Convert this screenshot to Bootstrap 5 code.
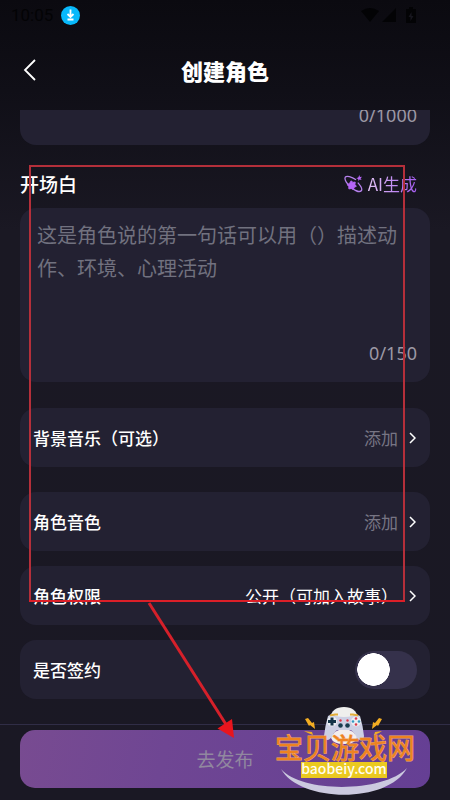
<!DOCTYPE html>
<html lang="zh-CN">
<head>
<meta charset="utf-8">
<meta name="viewport" content="width=device-width, initial-scale=1">
<title>创建角色</title>
<link href="https://cdn.jsdelivr.net/npm/bootstrap@5.3.0/dist/css/bootstrap.min.css" rel="stylesheet">
<style>
  body {
    background: linear-gradient(#0b0a10 0, #100f17 90px, #1a1823 230px, #1a1824 100%);
    color: #fff;
    font-family: "Noto Sans", "Noto Sans CJK SC", sans-serif;
    font-size: 17px;
    line-height: 24px;
  }
  .cjk { font-family: "Noto Sans CJK SC", sans-serif; }
  .status-bar { height: 30px; padding: 0 34px 0 11px; color: #030305; font: 17px/30px Roboto, sans-serif; }
  .top-bar { height: 80px; padding: 0 20px; }
  .top-bar h1 { font-size: 22px; line-height: 32px; font-weight: 900; }
  .side { width: 24px; }
  .form-area { min-height: 0; padding: 0 20px 25px; }
  .panel { background: #232132; border-radius: 16px; padding: 0 13px; flex-shrink: 0; }
  .prior { height: 80px; padding-bottom: 18px; }
  .counter { font-size: 18px; line-height: 24px; color: #9c98a5; }
  .section-head { height: 63px; padding-top: 26px; flex-shrink: 0; }
  .section-head h2 { font-size: 19px; line-height: 26px; font-weight: 500; }
  .ai-btn { gap: 5px; margin-right: 13px; font-size: 17px; line-height: 26px; }
  .ai-btn span { background: linear-gradient(90deg, #e3c4f6, #a45bf0); -webkit-background-clip: text; background-clip: text; color: transparent; }
  .opening { height: 174px; margin-bottom: 26px; padding-top: 10px; padding-bottom: 17px; }
  .opening textarea { resize: none; padding: 0 4px; font-size: 20px; line-height: 33px; color: #fff; outline: 0; overflow: hidden; }
  .opening textarea::placeholder { color: #71717f; opacity: 1; }
  .entry { height: 59px; margin-bottom: 15px; color: #fff; font-size: 17px; }
  .entry.wide-gap { margin-bottom: 25px; }
  .entry.last { margin-bottom: 0; }
  .entry b, .entry label { font-weight: 500; }
  .hint { color: #777584; }
  .entry svg { margin: 0 1px 0 10px; }
  .toggle.form-check-input {
    width: 62px; height: 38px; border: 0; border-radius: 19px; margin: 0; float: none;
    background: #35314b radial-gradient(circle closest-side, #fff 97%, transparent) 2px center / 33px 33px no-repeat;
  }
  .toggle.form-check-input:checked { background-color: #784b91; background-position: right 2px center; }
  .foot { border-top: 1px solid #302d46; padding: 5px 20px 12px; }
  .publish { height: 58px; border-radius: 15px; font-size: 19px; color: #91889f; background: linear-gradient(100deg, #784b91, #6f4693 35%, #653f94); }
  .publish:hover { color: #fff; }
  .marks { left: 0; top: 0; pointer-events: none; }
  .brand { right: 30px; bottom: 0; pointer-events: none; }
</style>
<script src="https://cdn.jsdelivr.net/npm/bootstrap@5.3.0/dist/js/bootstrap.bundle.min.js"></script>
</head>
<body>
<div class="position-relative vh-100 d-flex flex-column overflow-hidden">
  <div class="status-bar flex-shrink-0 d-flex align-items-center">
    <span>10:05</span>
    <svg class="ms-2" width="19" height="19" viewBox="0 0 19 19" aria-hidden="true"><circle cx="9.500" cy="9.500" r="9.500" fill="#08b9fb"/><path d="M9.500 3.500v7M6.500 8l3 3 3-3M6.500 13.500h6" fill="none" stroke="#fff" stroke-width="1.800"/></svg>
    <svg class="ms-auto" width="56" height="18" viewBox="0 0 56 18" fill="#030305" aria-hidden="true"><path d="M1 5Q10-1 19 5L10 16ZM22 16L36 2V16ZM46 3h3V1h4v2h3v14H46Z"/><path d="M51.500 6l-3 5h2v4l3-5h-2Z" fill="#17161e"/></svg>
  </div>
  <header class="top-bar flex-shrink-0 d-flex align-items-center justify-content-between">
    <button type="button" class="btn p-0 border-0 side d-flex" aria-label="返回"><svg width="20" height="24" viewBox="0 0 20 24" fill="none" stroke="#fff" stroke-width="1.800"><path d="M15 2L5 12l10 10"/></svg></button>
    <h1 class="m-0 cjk">创建角色</h1>
    <span class="side"></span>
  </header>

  <main class="form-area flex-grow-1 d-flex flex-column justify-content-end overflow-hidden">
    <div class="panel prior d-flex align-items-end justify-content-end"><span class="counter">0/1000</span></div>

    <div class="section-head d-flex align-items-start justify-content-between">
      <h2 class="m-0 cjk"><label for="opening">开场白</label></h2>
      <button type="button" class="ai-btn btn p-0 border-0 d-flex align-items-center cjk">
        <svg width="19" height="18" viewBox="0 0 19 18" aria-hidden="true"><path d="M12 4.800C7.500 1.500 2.500 .4 1.300 2.200 0 4.500 3 9.500 8 13.200c4 3 8 4.100 9.300 2.600 1.200-1.500-.5-4.900-3.500-8.200" fill="none" stroke="#b681ed" stroke-width="1.300"/><path d="M7.300 5.800l1.600 1.600 2.300-.3-.3 2.300 1.400 1.900-2.100 1-.9 2.200-2.100-1-2.300.4-.1-2.400L3.300 9.700l2.100-1.200Z" fill="#b565f6" stroke="#b565f6" stroke-linejoin="round"/><path d="M15.500 0l.4 2.100 2.100-.3-1.400 1.600 1 1.600-2-.6-1.300 1.500-.1-2-2-.7 2-.8Z" fill="#b565f6"/></svg>
        <span>AI生成</span>
      </button>
    </div>

    <div class="panel opening d-flex flex-column">
      <textarea id="opening" class="w-100 flex-grow-1 border-0 bg-transparent cjk" maxlength="150" placeholder="这是角色说的第一句话可以用（）描述动作、环境、心理活动"></textarea>
      <span class="counter align-self-end">0/150</span>
    </div>

    <button type="button" class="panel entry wide-gap border-0 d-flex align-items-center cjk">
      <b>背景音乐（可选）</b><span class="hint ms-auto">添加</span>
      <svg width="8" height="12" viewBox="0 0 8 12" fill="none" stroke="#fff" stroke-width="1.500" aria-hidden="true"><path d="M2 1l5 5-5 5"/></svg>
    </button>
    <button type="button" class="panel entry border-0 d-flex align-items-center cjk">
      <b>角色音色</b><span class="hint ms-auto">添加</span>
      <svg width="8" height="12" viewBox="0 0 8 12" fill="none" stroke="#fff" stroke-width="1.500" aria-hidden="true"><path d="M2 1l5 5-5 5"/></svg>
    </button>
    <button type="button" class="panel entry border-0 d-flex align-items-center cjk">
      <b>角色权限</b><span class="ms-auto">公开（可加入故事）</span>
      <svg width="8" height="12" viewBox="0 0 8 12" fill="none" stroke="#fff" stroke-width="1.500" aria-hidden="true"><path d="M2 1l5 5-5 5"/></svg>
    </button>
    <div class="panel entry last d-flex align-items-center justify-content-between cjk">
      <label for="signed">是否签约</label>
      <input id="signed" class="form-check-input toggle" type="checkbox" role="switch">
    </div>
  </main>

  <footer class="foot flex-shrink-0">
    <button type="button" class="publish btn border-0 w-100 cjk">去发布</button>
  </footer>

  <svg class="marks position-absolute" width="450" height="800" viewBox="0 0 450 800" aria-hidden="true">
    <path d="M30 602V166H404V602" fill="none" stroke="#b42f3a" stroke-width="2"/>
    <path d="M29 601H405" stroke="#dc1f28" stroke-width="2"/>
    <path d="M149 603L227 726" stroke="#d6202a" stroke-width="3"/>
    <path d="M234 738L217.500 728.500 232 719Z" fill="#e9151d"/>
  </svg>

  <svg class="brand position-absolute" width="150" height="96" viewBox="270 704 150 96" role="img" aria-label="宝贝游戏网 baobeiy.com">
    <path d="M281 769C300 803 388 804 407 768C385 792 303 794 281 769Z" fill="#cbc9df"/>
    <path d="M330 718q2-11 14-11t14 11l1 8h-30Z" fill="#efefed"/>
    <path d="M328 716q4-3 8 0 8 2 16 0 4-3 8 0 3 10 4 20 0 4-4 4-4-1-6-7l-3-3h-14l-3 3q-3 6-6 7-4 0-4-4 1-10 4-20Z" fill="#cdd0e4"/>
    <path d="M331 738q3-7 8-8h10q5 1 8 8-2 6-13 6t-13-6Z" fill="#f3eeee"/>
    <path d="M330 715.500l5-1h3M350 714.500h3l5 1" fill="none" stroke="#e2ad38" stroke-width="2"/>
    <circle cx="332" cy="721.500" r="5" fill="#e9edf2"/><path d="M332 717.500v8M328 721.500h8" stroke="#143448" stroke-width="3"/>
    <circle cx="356" cy="721.500" r="5" fill="#e9edf2"/>
    <g fill="#df3748"><circle cx="356" cy="718.500" r="1.300"/><circle cx="356" cy="724.500" r="1.300"/><circle cx="340.500" cy="720.500" r="1.200"/><circle cx="347.500" cy="720.500" r="1.200"/></g>
    <g fill="#329ac2"><circle cx="353" cy="721.500" r="1.300"/><circle cx="359" cy="721.500" r="1.300"/></g>
    <g fill="#183c4f"><circle cx="340.500" cy="725.500" r="2.300"/><circle cx="347.500" cy="725.500" r="2.300"/></g>
    <path d="M305 719l3-1 4 5 2-1 1 7-5-4-1 1ZM304 731l8 1 1 3-5-2ZM382 719l-3-1-4 5-2-1-1 7 5-4 1 1ZM382 731l-7 1-1 3 5-2Z" fill="#f3ad22"/>
    <text x="275" y="759" font-family="Noto Sans CJK SC, sans-serif" font-size="28" font-weight="400" fill="#ee8220" stroke="#f0a868" stroke-width="1" paint-order="stroke">宝贝游戏网</text>
    <rect x="301" y="762" width="86" height="16" fill="#ebc91f"/>
    <text x="344" y="774" text-anchor="middle" font-family="Noto Sans CJK SC, sans-serif" font-size="14" font-weight="500" fill="#fffdf0">baobeiy.com</text>
  </svg>
</div>
</body>
</html>
